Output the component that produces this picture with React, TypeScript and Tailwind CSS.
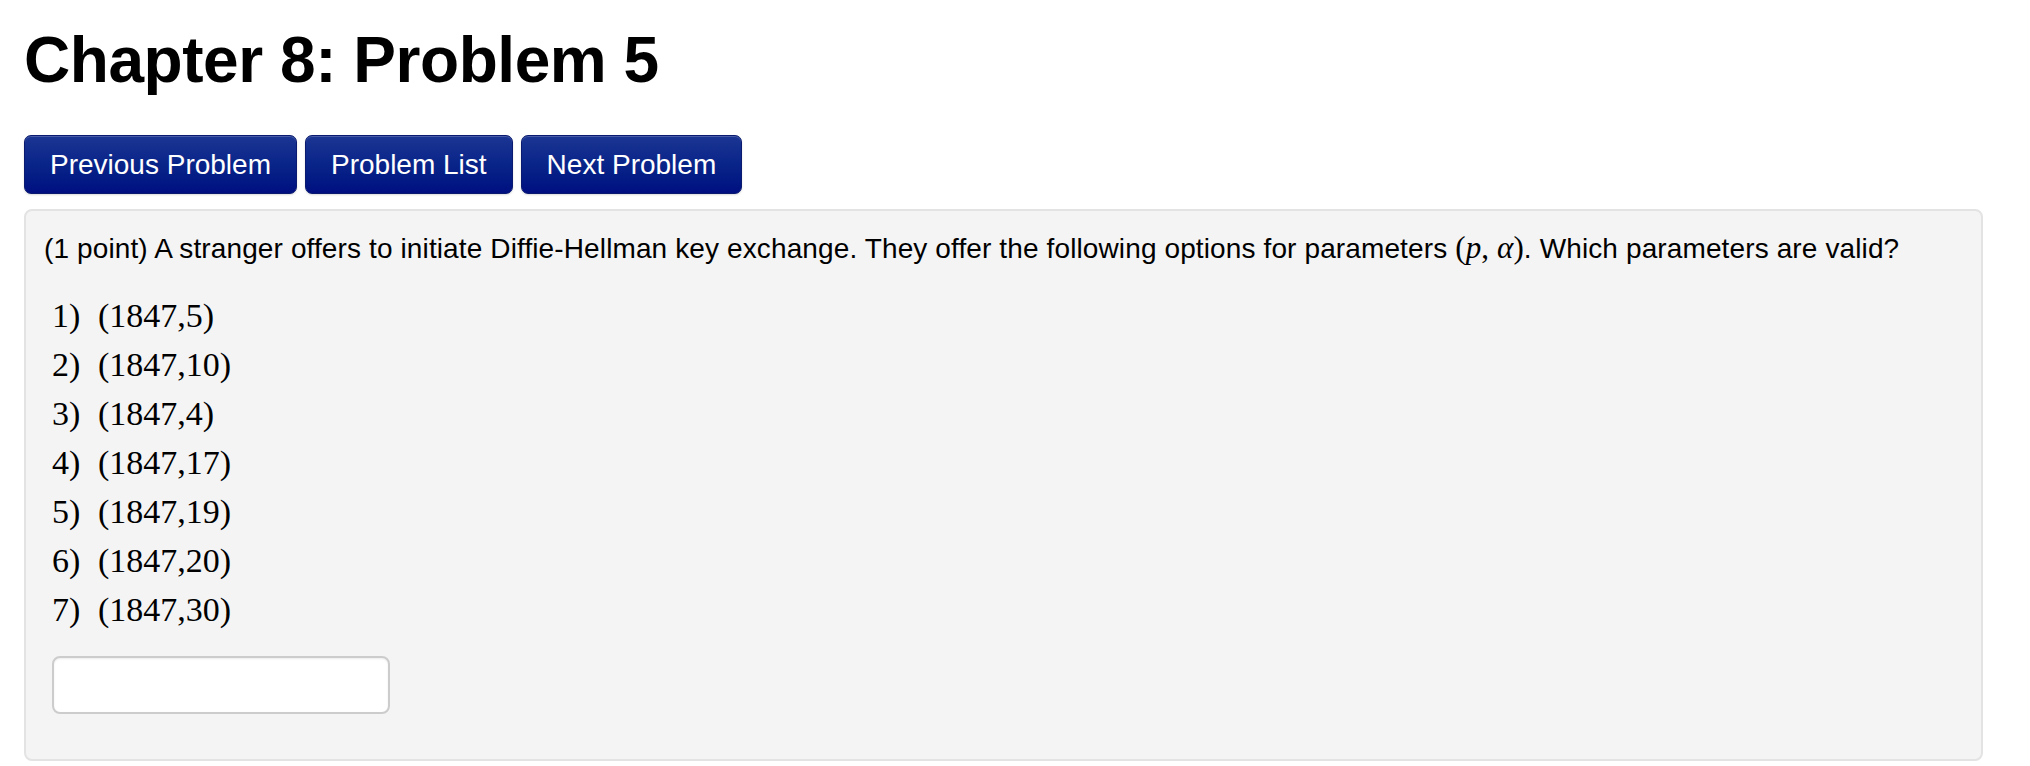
const options = ['(1847,5)', '(1847,10)', '(1847,4)', '(1847,17)', '(1847,19)', '(1847,20)', '(1847,30)']

const navButtons = ['Previous Problem', 'Problem List', 'Next Problem']

export default function App() {
  return (
    <div className="min-h-screen bg-white pl-[24px] pr-[47px] text-black font-['Liberation_Sans',Arial,sans-serif]">
      <h1 className="pt-[25px] text-[64px] leading-[70px] font-bold tracking-[-0.45px]">Chapter 8: Problem 5</h1>

      {/* nav */}
      <div className="mt-[40px] flex gap-[8px]">
        {navButtons.map((label) => (
          <button
            key={label}
            className="h-[59px] rounded-[7px] border border-[#0a1a6e] bg-linear-to-b from-[#1a3592] to-[#000e80] px-[25px] text-[28px] text-white shadow-[inset_0_1px_0_rgba(255,255,255,0.2),0_1px_2px_rgba(0,0,0,0.15)]"
          >
            {label}
          </button>
        ))}
      </div>

      {/* problem body */}
      <div className="mt-[15px] rounded-lg border-2 border-[#e3e3e3] bg-[#f4f4f4] pl-[18px] pt-[17px] pb-[45px]">
        <p className="text-[28px] leading-[40px] tracking-[0.12px]">
          (1 point) A stranger offers to initiate Diffie-Hellman key exchange. They offer the following options for parameters{' '}
          <span className="font-['Liberation_Serif',serif] text-[31px]">
            (<i>p</i>, <i>α</i>)
          </span>
          . Which parameters are valid?
        </p>

        <div className="mt-[22px] ml-[8px] font-['Liberation_Serif',serif] text-[34px] leading-[49px]">
          {options.map((opt, i) => (
            <div key={opt} className="flex">
              <span className="w-[46px]">{i + 1})</span>
              <span>{opt}</span>
            </div>
          ))}
        </div>

        <input
          type="text"
          className="mt-[22px] ml-[8px] block h-[58px] w-[338px] rounded-lg border-2 border-[#cccccc] bg-white px-3 text-[28px] shadow-[inset_0_1px_2px_rgba(0,0,0,0.08)] outline-none"
        />
      </div>
    </div>
  )
}
